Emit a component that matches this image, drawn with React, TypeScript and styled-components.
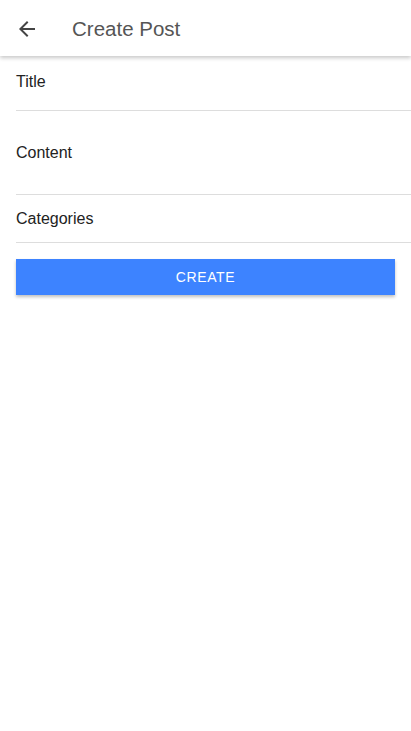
import React from "react";
import styled, { createGlobalStyle } from "styled-components";

const Global = createGlobalStyle`
  html, body { margin: 0; padding: 0; background: #fff; }
  body { font-family: "Liberation Sans", Arial, sans-serif; }
  * { box-sizing: border-box; }
`;

const Page = styled.div`
  width: 411px;
  min-height: 731px;
  background: #fff;
`;

const Header = styled.header`
  height: 56px;
  display: flex;
  align-items: center;
  padding: 1px 0 0 15px;
  background: #fff;
  box-shadow: 0 2px 4px rgba(0, 0, 0, 0.22);
  position: relative;
  z-index: 1;
`;

const BackButton = styled.button`
  width: 24px;
  height: 24px;
  padding: 0;
  border: none;
  background: none;
  display: flex;
  color: #444;
`;

const HeaderTitle = styled.h1`
  margin: 0 0 0 33px;
  font-size: 20.5px;
  font-weight: 400;
  color: #555;
`;

const Form = styled.form`
  display: flex;
  flex-direction: column;
  padding: 1px 0 0 16px;
`;

const Field = styled.div<{ $top: number; $height: number }>`
  height: ${(p) => p.$height}px;
  padding-top: ${(p) => p.$top}px;
  border-bottom: 1px solid #ddd;
  font-size: 16px;
  color: #222;
  line-height: 18px;
`;

const ButtonRow = styled.div`
  padding: 16px 16px 0 0;
`;

const CreateButton = styled.button`
  width: 100%;
  height: 36px;
  border: none;
  background: #3d83ff;
  color: #fff;
  font-family: "Liberation Sans", Arial, sans-serif;
  font-size: 14px;
  letter-spacing: 0.6px;
  box-shadow: 0 2px 3px rgba(0, 0, 0, 0.25);
`;

export default function App() {
  return (
    <Page>
      <Global />
      <Header>
        <BackButton aria-label="back">
          <svg width="24" height="24" viewBox="0 0 24 24" fill="currentColor">
            <path d="M20 11H7.83l5.59-5.59L12 4l-8 8 8 8 1.41-1.41L7.83 13H20v-2z" />
          </svg>
        </BackButton>
        <HeaderTitle>Create Post</HeaderTitle>
      </Header>
      <Form>
        <Field $top={16} $height={54}>Title</Field>
        <Field $top={33} $height={84}>Content</Field>
        <Field $top={15} $height={48}>Categories</Field>
        <ButtonRow>
          <CreateButton type="button">CREATE</CreateButton>
        </ButtonRow>
      </Form>
    </Page>
  );
}
